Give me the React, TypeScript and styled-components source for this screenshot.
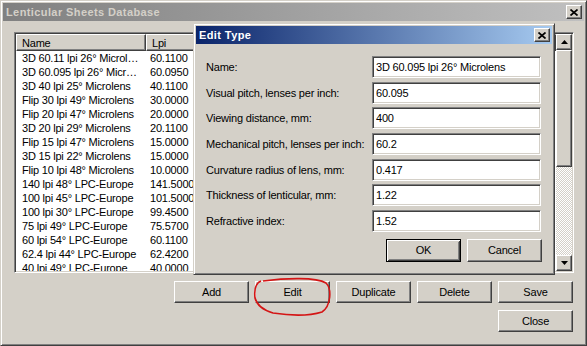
import React from 'react';
import styled, { createGlobalStyle, css } from 'styled-components';

const GlobalStyle = createGlobalStyle`
  html, body {
    margin: 0;
    padding: 0;
    background: #d4d0c8;
  }
  body {
    font-family: Tahoma, "Liberation Sans", Arial, sans-serif;
    font-size: 11px;
    letter-spacing: -0.2px;
    color: #000;
  }
`;

const raised = css`
  border: 1px solid;
  border-color: #ffffff #404040 #404040 #ffffff;
  box-shadow: inset -1px -1px #808080, inset 1px 1px #d4d0c8;
`;

const sunken = css`
  border: 1px solid;
  border-color: #808080 #ffffff #ffffff #808080;
  box-shadow: inset 1px 1px #404040, inset -1px -1px #d4d0c8;
`;

const Window = styled.div`
  position: relative;
  box-sizing: border-box;
  width: 587px;
  height: 346px;
  background: #d4d0c8;
  border: 1px solid;
  border-color: #d4d0c8 #404040 #404040 #d4d0c8;
  box-shadow: inset 1px 1px #ffffff, inset -1px -1px #808080;
  display: flex;
  flex-direction: column;
  padding: 2px;
  overflow: hidden;
`;

const TitleBar = styled.div<{ $active?: boolean }>`
  height: 18px;
  flex: none;
  display: flex;
  align-items: center;
  justify-content: space-between;
  padding: 0 2px;
  background: ${({ $active }) =>
    $active
      ? 'linear-gradient(to right, #0a246a, #a6caf0)'
      : 'linear-gradient(to right, #808080, #c0c0c0)'};
  color: ${({ $active }) => ($active ? '#ffffff' : '#d4d0c8')};
  font-weight: bold;
  font-size: 11px;
  letter-spacing: 0.4px;
`;

const TitleText = styled.span`
  padding-left: 1px;
  white-space: nowrap;
`;

const CloseBox = styled.div`
  ${raised};
  box-sizing: border-box;
  width: 16px;
  height: 14px;
  background: #d4d0c8;
  display: flex;
  align-items: center;
  justify-content: center;
`;

const Body = styled.div`
  flex: 1;
  display: flex;
  flex-direction: column;
  padding: 11px 10px 0 11px;
`;

const ListView = styled.div`
  ${sunken};
  box-sizing: border-box;
  height: 241px;
  padding: 1px;
  background: #ffffff;
  display: flex;
`;

const ListContent = styled.div`
  flex: 1;
  overflow: hidden;
  display: flex;
  flex-direction: column;
`;

const Header = styled.div`
  display: flex;
  height: 17px;
  flex: none;
  background: #d4d0c8;
`;

const HeaderCell = styled.div<{ $width?: number }>`
  ${raised};
  box-sizing: border-box;
  width: ${({ $width }) => ($width ? `${$width}px` : 'auto')};
  flex: ${({ $width }) => ($width ? 'none' : '1')};
  padding: 0 5px;
  display: flex;
  align-items: center;
  white-space: nowrap;
`;

const Row = styled.div`
  display: flex;
  height: 14.1px;
  line-height: 14px;
  white-space: nowrap;
`;

const NameCell = styled.div`
  width: 130px;
  flex: none;
  box-sizing: border-box;
  padding: 0 6px;
  overflow: hidden;
  text-overflow: ellipsis;
`;

const LpiCell = styled.div`
  padding-left: 4px;
`;

const ScrollBar = styled.div`
  width: 16px;
  flex: none;
  display: flex;
  flex-direction: column;
`;

const ScrollButton = styled.div`
  ${raised};
  box-sizing: border-box;
  width: 16px;
  height: 16px;
  flex: none;
  background: #d4d0c8;
  display: flex;
  align-items: center;
  justify-content: center;
`;

const Thumb = styled.div`
  ${raised};
  box-sizing: border-box;
  height: 117px;
  flex: none;
  background: #d4d0c8;
`;

const Track = styled.div`
  flex: 1;
  background: repeating-conic-gradient(#ffffff 0 25%, #d4d0c8 0 50%) 0 0 / 2px 2px;
`;

const ButtonRow = styled.div<{ $top: number }>`
  display: flex;
  justify-content: flex-end;
  gap: 6px;
  margin-top: ${({ $top }) => $top}px;
  margin-right: 1px;
`;

const Button = styled.button<{ $default?: boolean; $height?: number }>`
  box-sizing: border-box;
  width: 75px;
  height: ${({ $height }) => $height ?? 22}px;
  margin: 0;
  padding: 0;
  font: inherit;
  letter-spacing: inherit;
  color: #000;
  background: #d4d0c8;
  ${({ $default }) =>
    $default
      ? css`
          border: 1px solid #000;
          box-shadow: inset 1px 1px #ffffff, inset -1px -1px #404040,
            inset 2px 2px #d4d0c8, inset -2px -2px #808080;
        `
      : raised};
`;

const Dialog = styled.div`
  position: absolute;
  left: 192px;
  top: 22px;
  box-sizing: border-box;
  width: 362px;
  height: 252px;
  padding: 2px;
  background: #d4d0c8;
  border: 1px solid;
  border-color: #d4d0c8 #404040 #404040 #d4d0c8;
  box-shadow: inset 1px 1px #ffffff, inset -1px -1px #808080;
  display: flex;
  flex-direction: column;
`;

const Form = styled.div`
  display: grid;
  grid-template-columns: 166px 169px;
  row-gap: 3.67px;
  padding: 12px 11px 0 10px;
  align-items: center;
`;

const Label = styled.label`
  white-space: nowrap;
`;

const Field = styled.input`
  ${sunken};
  box-sizing: border-box;
  width: 169px;
  height: 22px;
  margin: 0;
  padding: 0 3px;
  font: inherit;
  letter-spacing: inherit;
  color: #000;
  background: #ffffff;
  outline: none;
`;

const DialogButtons = styled.div`
  display: flex;
  justify-content: flex-end;
  gap: 6px;
  margin-top: 7px;
  padding-right: 10px;
`;

const Annotation = styled.svg`
  position: absolute;
  left: 0;
  top: 0;
  pointer-events: none;
`;

const CloseIcon = () => (
  <svg width="8" height="7" viewBox="0 0 8 7">
    <path d="M0.5 0.5 L7.5 6.5 M7.5 0.5 L0.5 6.5" stroke="#000" strokeWidth="1.7" fill="none" />
  </svg>
);

const Arrow = ({ down }: { down?: boolean }) => (
  <svg width="7" height="4" viewBox="0 0 7 4">
    <polygon points={down ? '0,0 7,0 3.5,4' : '0,4 7,4 3.5,0'} fill="#000" />
  </svg>
);

const SHEETS: [string, string][] = [
  ['3D 60.11 lpi 26° Microlens', '60.1100'],
  ['3D 60.095 lpi 26° Microlens', '60.0950'],
  ['3D 40 lpi 25° Microlens', '40.1100'],
  ['Flip 30 lpi 49° Microlens', '30.0000'],
  ['Flip 20 lpi 47° Microlens', '20.0000'],
  ['3D 20 lpi 29° Microlens', '20.1100'],
  ['Flip 15 lpi 47° Microlens', '15.0000'],
  ['3D 15 lpi 22° Microlens', '15.0000'],
  ['Flip 10 lpi 48° Microlens', '10.0000'],
  ['140 lpi 48° LPC-Europe', '141.5000'],
  ['100 lpi 45° LPC-Europe', '101.5000'],
  ['100 lpi 30° LPC-Europe', '99.4500'],
  ['75 lpi 49° LPC-Europe', '75.5700'],
  ['60 lpi 54° LPC-Europe', '60.1100'],
  ['62.4 lpi 44° LPC-Europe', '62.4200'],
  ['40 lpi 49° LPC-Europe', '40.0000'],
];

const FIELDS: [string, string][] = [
  ['Name:', '3D 60.095 lpi 26° Microlens'],
  ['Visual pitch, lenses per inch:', '60.095'],
  ['Viewing distance, mm:', '400'],
  ['Mechanical pitch, lenses per inch:', '60.2'],
  ['Curvature radius of lens, mm:', '0.417'],
  ['Thickness of lenticular, mm:', '1.22'],
  ['Refractive index:', '1.52'],
];

const App = () => {
  return (
    <>
      <GlobalStyle />
      <Window>
        <TitleBar>
          <TitleText>Lenticular Sheets Database</TitleText>
          <CloseBox><CloseIcon /></CloseBox>
        </TitleBar>
        <Body>
          <ListView>
            <ListContent>
              <Header>
                <HeaderCell $width={130}>Name</HeaderCell>
                <HeaderCell $width={100}>Lpi</HeaderCell>
                <HeaderCell />
              </Header>
              {SHEETS.map(([name, lpi]) => (
                <Row key={name}>
                  <NameCell>{name}</NameCell>
                  <LpiCell>{lpi}</LpiCell>
                </Row>
              ))}
            </ListContent>
            <ScrollBar>
              <ScrollButton><Arrow /></ScrollButton>
              <Thumb />
              <Track />
              <ScrollButton><Arrow down /></ScrollButton>
            </ScrollBar>
          </ListView>
          <ButtonRow $top={8}>
            <Button>Add</Button>
            <Button>Edit</Button>
            <Button>Duplicate</Button>
            <Button>Delete</Button>
            <Button>Save</Button>
          </ButtonRow>
          <ButtonRow $top={7}>
            <Button>Close</Button>
          </ButtonRow>
        </Body>

        <Dialog>
          <TitleBar $active>
            <TitleText>Edit Type</TitleText>
            <CloseBox><CloseIcon /></CloseBox>
          </TitleBar>
          <Form>
            {FIELDS.map(([label, value]) => (
              <React.Fragment key={label}>
                <Label>{label}</Label>
                <Field defaultValue={value} />
              </React.Fragment>
            ))}
          </Form>
          <DialogButtons>
            <Button $default $height={23}>OK</Button>
            <Button $height={23}>Cancel</Button>
          </DialogButtons>
        </Dialog>

        <Annotation width="587" height="346" viewBox="0 0 587 346">
          <path
            d="M262 280 C285 277 315 276 325 282 C331 288 330 305 321 311 C305 316 285 314 272 312 C262 309 256 305 254 297 C253 288 255 282 260 280"
            stroke="#d41515"
            strokeWidth="1.6"
            fill="none"
          />
        </Annotation>
      </Window>
    </>
  );
};

export default App;
